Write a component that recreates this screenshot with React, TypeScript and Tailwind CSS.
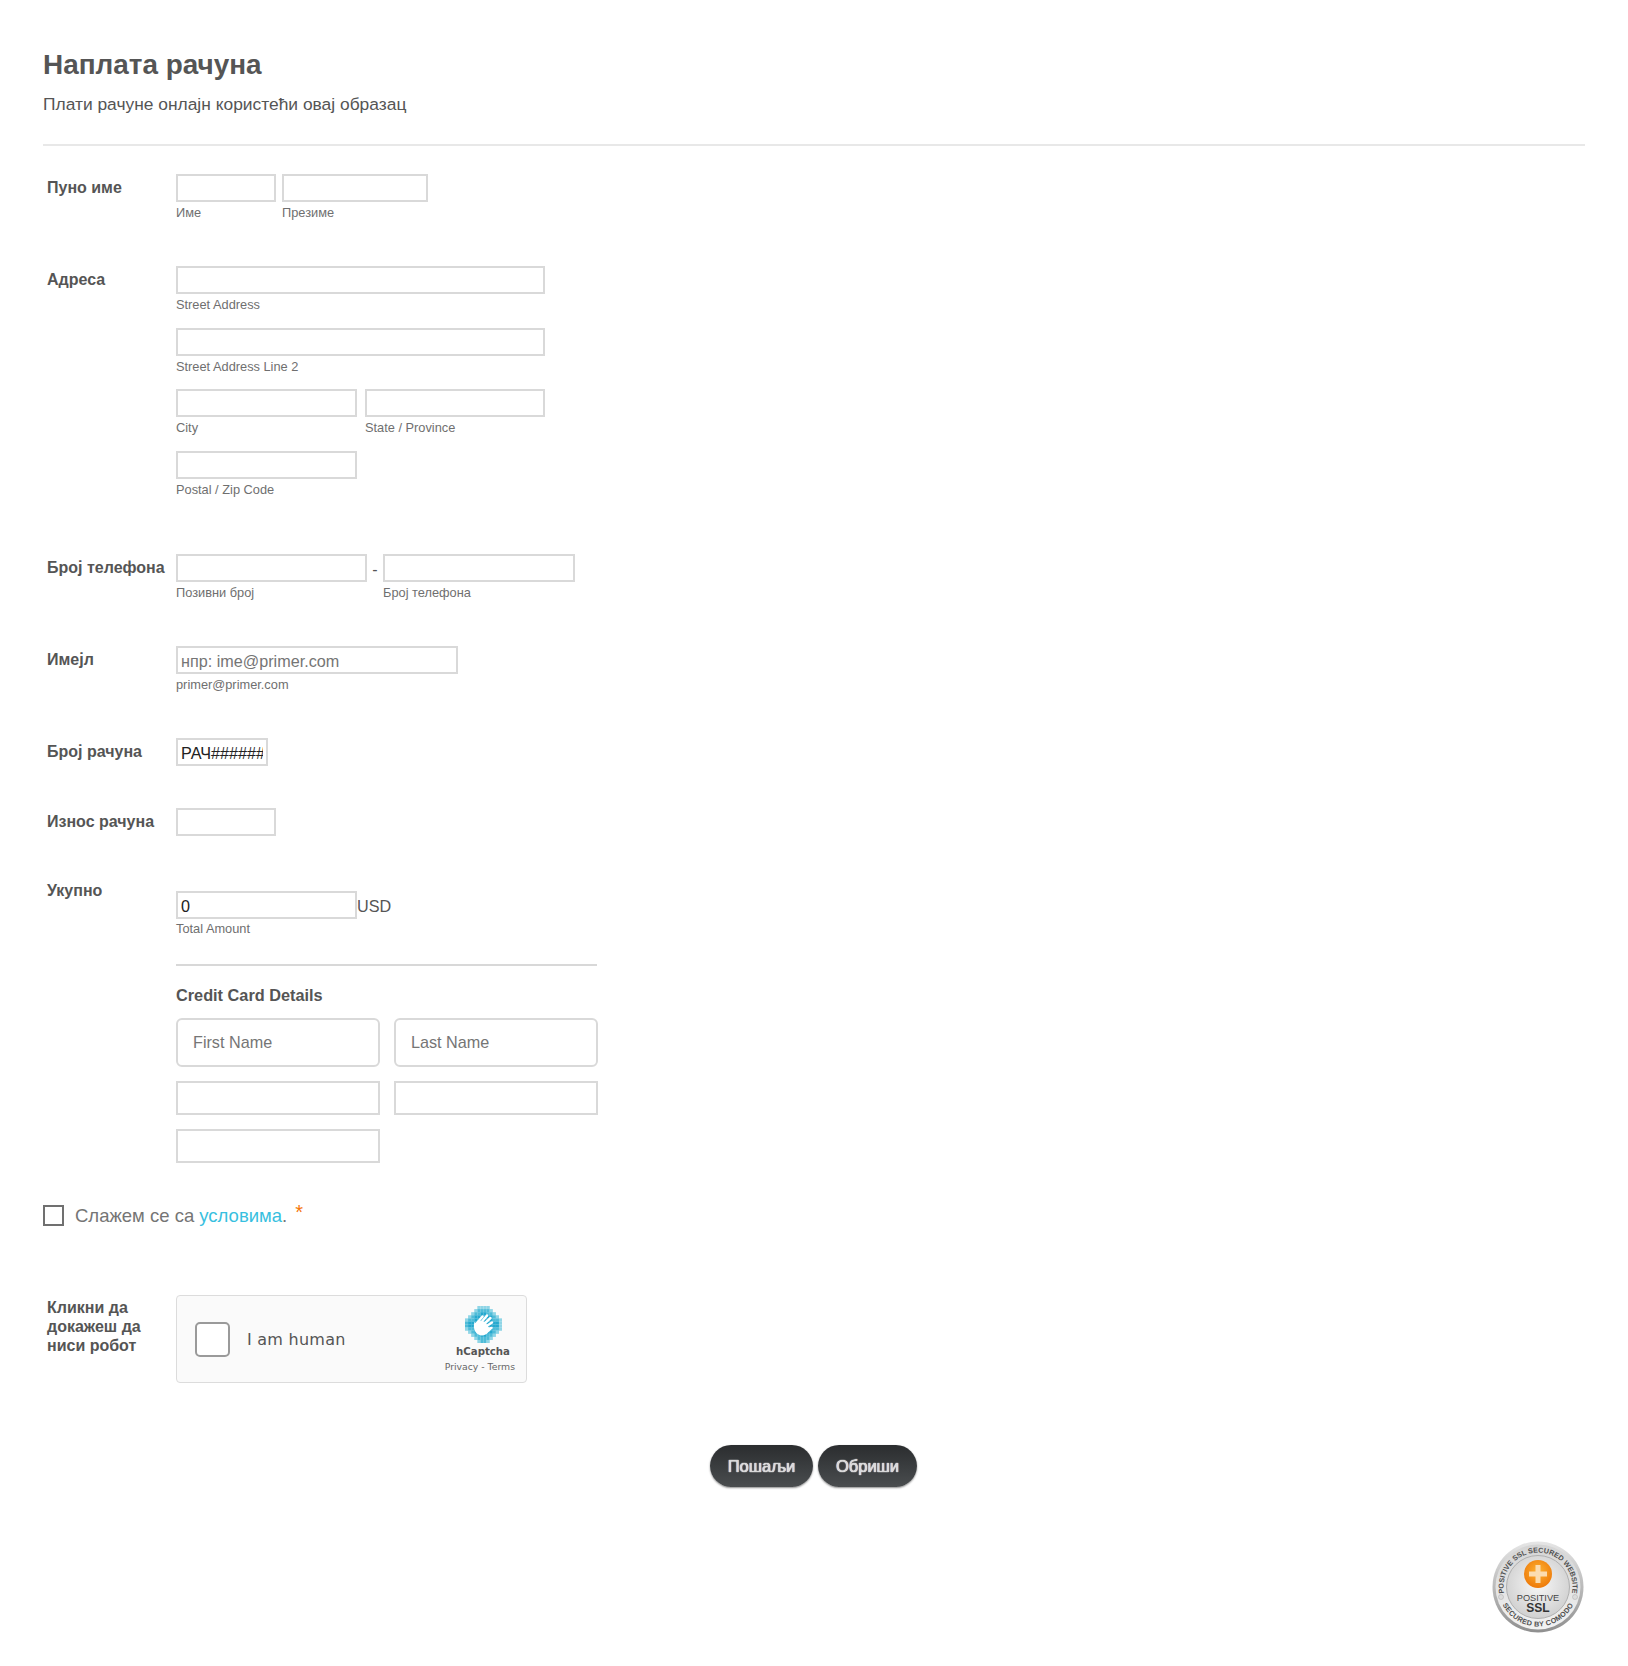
import type { ReactNode } from 'react';

const inputCls =
  'block h-7 border-2 border-[#d9d9d9] bg-white px-[3px] pt-[3px] text-[16.2px] leading-none text-[#222] outline-none placeholder:text-[#757575]';
const subCls = 'mt-[2px] block h-[17px] text-[12.8px] leading-[17px] text-[#6f6f6f]';
const cardCls =
  'h-[49px] rounded-[6px] border-2 border-[#d9d9d9] bg-white px-[15px] text-[16.2px] outline-none placeholder:text-[#757575]';
const cardPlainCls = 'mt-[14px] h-[34px] border-2 border-[#d9d9d9] bg-white outline-none';

function Field({ w, sub, mr, value, placeholder }: { w: string; sub?: string; mr?: string; value?: string; placeholder?: string }) {
  return (
    <div className={`${w} ${mr ?? ''}`}>
      <input className={`${inputCls} w-full`} defaultValue={value} placeholder={placeholder} />
      {sub && <span className={subCls}>{sub}</span>}
    </div>
  );
}

function Row({ label, top, children }: { label: string; top: string; children: ReactNode }) {
  return (
    <div className={`flex ${top}`}>
      <label className="ml-[4px] w-[129px] shrink-0 pt-[4px] text-[16px] font-bold leading-[19px] text-[#555]">{label}</label>
      <div>{children}</div>
    </div>
  );
}

function HCaptchaLogo() {
  const pattern = [
    '....aaaa....',
    '...abbbba...',
    '..abbccbba..',
    '.abccccccba.',
    'abbccccccbba',
    'bcccccccccca',
    'bcccccccccca',
    'abbccccccbba',
    '.abccccccba.',
    '..abbccbba..',
    '...abbbba...',
    '....abba....',
  ];
  const colors: Record<string, string> = { a: '#8fd5e6', b: '#4fbcd8', c: '#25a9cf' };
  const size = 37 / 12;
  return (
    <svg width="37" height="37" viewBox="0 0 37 37">
      {pattern.map((row, y) =>
        row.split('').map((c, x) =>
          c === '.' ? null : (
            <rect key={`${x}-${y}`} x={x * size} y={y * size} width={size + 0.1} height={size + 0.1} fill={colors[c]} />
          ),
        ),
      )}
      <g fill="none" stroke="#fff" strokeLinecap="round" strokeWidth="2.4">
        <path d="M12 17 L17.5 10.5" />
        <path d="M15 18 L22 9.5" />
        <path d="M18 19 L25.5 12" />
        <path d="M20 21 L27 16.5" />
      </g>
      <path d="M9.5 16 C8.5 19 8.5 23 10.5 26 C13 29.5 18 30.5 21.5 28 L28 22 C27.5 20.5 25.5 20.5 24 21.5 L20 16 L13 14.5 L11 17 Z" fill="#fff" />
    </svg>
  );
}

function SslBadge() {
  return (
    <svg width="92" height="92" viewBox="0 0 92 92" className="block">
      <defs>
        <linearGradient id="ring" x1="0" y1="0" x2="0" y2="1">
          <stop offset="0" stopColor="#e6e6e6" />
          <stop offset="1" stopColor="#8f8f8f" />
        </linearGradient>
        <linearGradient id="band" x1="0" y1="0" x2="0" y2="1">
          <stop offset="0" stopColor="#d4d4d4" />
          <stop offset="1" stopColor="#f2f2f2" />
        </linearGradient>
        <radialGradient id="face" cx="0.5" cy="0.45" r="0.6">
          <stop offset="0" stopColor="#f7f7f7" />
          <stop offset="1" stopColor="#cdcdcd" />
        </radialGradient>
        <radialGradient id="orange" cx="0.5" cy="0.4" r="0.6">
          <stop offset="0" stopColor="#fdb333" />
          <stop offset="1" stopColor="#ee7a0a" />
        </radialGradient>
        <path id="arcTop" d="M46 80.5 A34.5 34.5 0 1 1 46 11.5 A34.5 34.5 0 1 1 46 80.5" />
        <path id="arcBottom" d="M46 6.5 A39.5 39.5 0 1 0 46 85.5 A39.5 39.5 0 1 0 46 6.5" />
      </defs>
      <circle cx="46" cy="46" r="45.5" fill="url(#ring)" />
      <circle cx="46" cy="46" r="42.5" fill="url(#band)" />
      <circle cx="46" cy="46" r="31.5" fill="url(#face)" stroke="#b0b0b0" />
      <text fontFamily="'Liberation Sans', sans-serif" fontSize="7.2" fontWeight="700" fill="#4f4f4f">
        <textPath href="#arcTop" startOffset="50%" textAnchor="middle">POSITIVE SSL SECURED WEBSITE</textPath>
      </text>
      <text fontFamily="'Liberation Sans', sans-serif" fontSize="7.2" fontWeight="700" fill="#4f4f4f" letterSpacing="0.3">
        <textPath href="#arcBottom" startOffset="50%" textAnchor="middle">SECURED BY COMODO</textPath>
      </text>
      <circle cx="9" cy="56" r="2.5" fill="#dcdcdc" stroke="#aaa" strokeWidth="0.5" />
      <circle cx="83" cy="56" r="2.5" fill="#dcdcdc" stroke="#aaa" strokeWidth="0.5" />
      <circle cx="46" cy="33" r="14" fill="url(#orange)" />
      <path d="M43.5 24h5v6.5h6.5v5h-6.5v6.5h-5v-6.5h-6.5v-5h6.5z" fill="#fbdcb0" />
      <text x="46" y="60" textAnchor="middle" fontFamily="'Liberation Sans', sans-serif" fontSize="9.2" fill="#444">POSITIVE</text>
      <text x="46" y="71" textAnchor="middle" fontFamily="'Liberation Sans', sans-serif" fontSize="12" fontWeight="700" fill="#333">SSL</text>
    </svg>
  );
}

function SubmitButton({ children, w }: { children: ReactNode; w: string }) {
  return (
    <button
      className={`${w} h-[42px] rounded-[21px] bg-gradient-to-b from-[#2b2d2f] via-[#3a3d3f] to-[#4a4d4f] text-[16.5px] text-[#d8d8d8] shadow-[0_1px_2px_rgba(0,0,0,0.45)] [text-shadow:0_0_1px_#fff,0_0_1px_#fff]`}
    >
      {children}
    </button>
  );
}

export default function App() {
  return (
    <div className="relative min-h-[1666px] bg-white px-[43px] pt-[48px] font-['Liberation_Sans',Arial,sans-serif]">
      <h1 className="text-[27.9px] font-bold leading-[34px] text-[#555]">Наплата рачуна</h1>
      <p className="mt-[12px] text-[17.4px] leading-[20px] text-[#555]">Плати рачуне онлајн користећи овај образац</p>
      <hr className="mt-[30px] h-[2px] border-0 bg-[#e8e8e8]" />

      <Row label="Пуно име" top="mt-[28px]">
        <div className="flex">
          <Field w="w-[100px]" mr="mr-[6px]" sub="Име" />
          <Field w="w-[146px]" sub="Презиме" />
        </div>
      </Row>

      <Row label="Адреса" top="mt-[45px]">
        <div className="flex w-[369px] flex-col gap-[14.5px]">
          <Field w="w-[369px]" sub="Street Address" />
          <Field w="w-[369px]" sub="Street Address Line 2" />
          <div className="flex gap-2">
            <Field w="w-[181px]" sub="City" />
            <Field w="w-[180px]" sub="State / Province" />
          </div>
          <Field w="w-[181px]" sub="Postal / Zip Code" />
        </div>
      </Row>

      <Row label="Број телефона" top="mt-[56.5px]">
        <div className="flex">
          <Field w="w-[191px]" sub="Позивни број" />
          <span className="w-4 pt-[6px] text-center text-[16px] leading-[20px] text-[#555]">-</span>
          <Field w="w-[192px]" sub="Број телефона" />
        </div>
      </Row>

      <Row label="Имејл" top="mt-[45px]">
        <Field w="w-[282px]" sub="primer@primer.com" placeholder="нпр: ime@primer.com" />
      </Row>

      <Row label="Број рачуна" top="mt-[45px]">
        <Field w="w-[92px]" value="РАЧ######" />
      </Row>

      <Row label="Износ рачуна" top="mt-[42px]">
        <Field w="w-[100px]" />
      </Row>

      <Row label="Укупно" top="mt-[41px]">
        <div className="pt-[14px]">
          <div className="flex items-center">
            <input className={`${inputCls} w-[181px]`} defaultValue="0" />
            <span className="pt-[3px] text-[16.2px] leading-none text-[#555]">USD</span>
          </div>
          <span className="mt-[1px] block h-[17px] text-[12.8px] leading-[17px] text-[#6f6f6f]">Total Amount</span>
          <div className="mt-[27px] w-[421px] border-t-2 border-[#d8d8d8]" />
          <div className="mt-[20px] text-[16.3px] font-bold leading-[19px] text-[#555]">Credit Card Details</div>
          <div className="mt-[13px] grid grid-cols-[204px_204px] gap-x-[14px]">
            <input className={cardCls} placeholder="First Name" />
            <input className={cardCls} placeholder="Last Name" />
            <input className={cardPlainCls} />
            <input className={cardPlainCls} />
            <input className={cardPlainCls} />
          </div>
        </div>
      </Row>

      <div className="mt-[42px] flex items-center">
        <span className="block h-[21px] w-[21px] border-2 border-[#707070] bg-white" />
        <span className="ml-[11px] text-[18.5px] leading-[21px] text-[#757575]">
          Слажем се са <span className="text-[#37bfe0]">условима</span>.
        </span>
        <span className="relative -top-[3px] ml-[8px] text-[20px] leading-[21px] text-[#f5760a]">*</span>
      </div>

      <Row label="Кликни да докажеш да ниси робот" top="mt-[68px]">
        <div className="mt-[1px] flex h-[88px] w-[351px] items-center justify-between rounded-[4px] border border-[#dcdcdc] bg-[#fafafa] pl-[18px] pr-[11px]">
          <div className="flex items-center">
            <span className="block h-[35px] w-[35px] rounded-[5px] border-2 border-[#9a9a9a] bg-white" />
            <span className="ml-[17px] pt-[2px] font-['DejaVu_Sans',sans-serif] text-[16px] tracking-[0.25px] text-[#555]">I am human</span>
          </div>
          <div className="flex flex-col items-end pt-[2px]">
            <span className="mr-[13px]"><HCaptchaLogo /></span>
            <span className="mr-[5px] mt-[2px] font-['DejaVu_Sans',sans-serif] text-[10.2px] font-bold leading-[14px] text-[#555]">hCaptcha</span>
            <span className="mt-[1px] whitespace-nowrap font-['DejaVu_Sans',sans-serif] text-[9.3px] leading-[14px] text-[#666]">Privacy - Terms</span>
          </div>
        </div>
      </Row>

      <div className="mt-[62px] flex justify-center gap-[5px] pr-[1px]">
        <SubmitButton w="w-[103px]">Пошаљи</SubmitButton>
        <SubmitButton w="w-[99px]">Обриши</SubmitButton>
      </div>

      <div className="mt-[54px] flex justify-end pr-[1px]">
        <SslBadge />
      </div>
    </div>
  );
}
